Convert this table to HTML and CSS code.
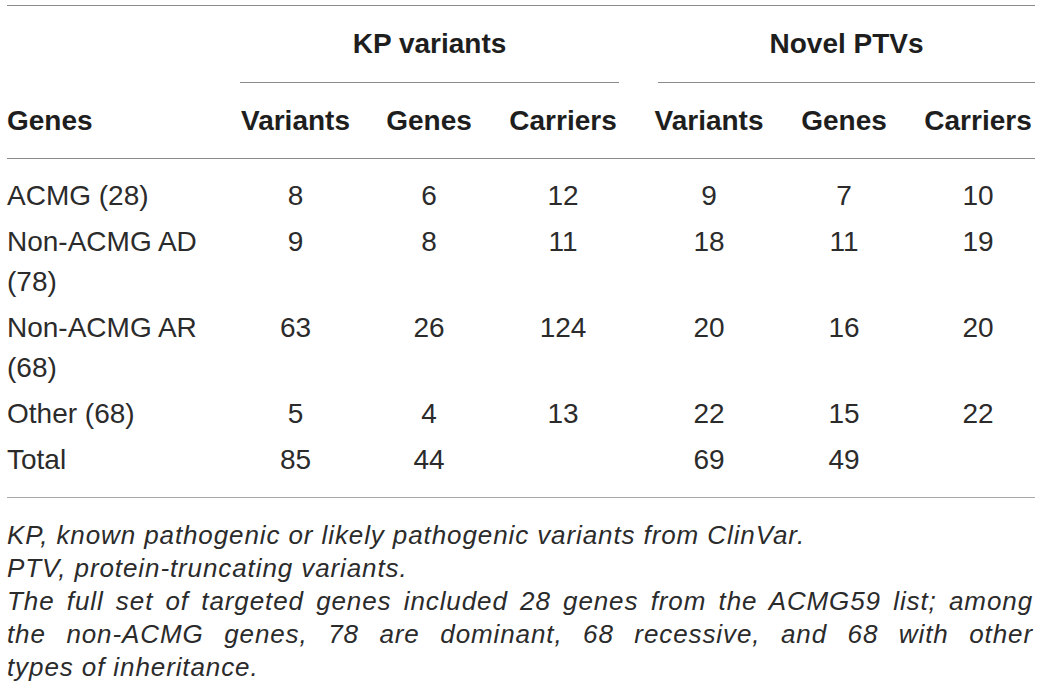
FILE: index.html
```html
<!DOCTYPE html>
<html>
<head>
<meta charset="UTF-8">
<title>KP variants and novel PTVs</title>
<link rel="stylesheet" href="styles.css">
</head>
<body>
	<div class="sheet">
		<table class="variants">
			<colgroup>
				<col class="c-genes">
				<col class="c-var">
				<col class="c-gen">
				<col class="c-car">
				<col class="c-var2">
				<col class="c-gen2">
				<col class="c-car2">
			</colgroup>
			<thead>
				<tr class="group-row">
					<th></th>
					<th colspan="3" class="group-kp"><div class="group-label">KP variants</div></th>
					<th colspan="3" class="group-novel"><div class="group-label">Novel PTVs</div></th>
				</tr>
				<tr class="head-row">
					<th class="name">Genes</th>
					<th>Variants</th>
					<th>Genes</th>
					<th>Carriers</th>
					<th>Variants</th>
					<th>Genes</th>
					<th class="last">Carriers</th>
				</tr>
			</thead>
			<tbody>
				<tr>
					<td class="name">ACMG (28)</td>
					<td>8</td><td>6</td><td>12</td>
					<td>9</td><td>7</td><td class="last">10</td>
				</tr>
				<tr>
					<td class="name">Non-ACMG AD (78)</td>
					<td>9</td><td>8</td><td>11</td>
					<td>18</td><td>11</td><td class="last">19</td>
				</tr>
				<tr>
					<td class="name">Non-ACMG AR (68)</td>
					<td>63</td><td>26</td><td>124</td>
					<td>20</td><td>16</td><td class="last">20</td>
				</tr>
				<tr>
					<td class="name">Other (68)</td>
					<td>5</td><td>4</td><td>13</td>
					<td>22</td><td>15</td><td class="last">22</td>
				</tr>
				<tr>
					<td class="name">Total</td>
					<td>85</td><td>44</td><td></td>
					<td>69</td><td>49</td><td class="last"></td>
				</tr>
			</tbody>
		</table>

		<div class="notes">
			<p>KP, known pathogenic or likely pathogenic variants from ClinVar.</p>
			<p>PTV, protein-truncating variants.</p>
			<p><span class="line">The full set of targeted genes included 28 genes from the ACMG59 list; among</span><span class="line">the non-ACMG genes, 78 are dominant, 68 recessive, and 68 with other</span>types of inheritance.</p>
		</div>
	</div>
</body>
</html>
```

FILE: styles.css
```css
* {
	padding: 0;
	margin: 0;
	box-sizing: border-box;
}

body {
	background-color: #fff;
	color: #2b2b2b;
	font-family: "Liberation Sans", Arial, sans-serif;
}

.sheet {
	width: 1028px;
	margin: 5px 0 0 7px;
}

.variants {
	width: 1028px;
	border-collapse: collapse;
	table-layout: fixed;
	font-size: 28px;
	line-height: 40px;
}

.c-genes { width: 216px; }
.c-var { width: 145px; }
.c-gen { width: 122px; }
.c-car { width: 146px; }
.c-var2 { width: 146px; }
.c-gen2 { width: 124px; }
.c-car2 { width: 129px; }

.variants th,
.variants td {
	padding: 3px 17px;
	text-align: center;
	vertical-align: top;
	white-space: nowrap;
}

.variants th {
	color: #1e1e1e;
	font-weight: bold;
}

.variants .name {
	padding-left: 0;
	text-align: left;
	white-space: normal;
}

.variants .last {
	padding-right: 2px;
}

/* header rules */
.group-row th {
	border-top: 1px solid #8c8c8c;
	padding-top: 18px;
	padding-bottom: 0;
}

.group-kp {
	padding-left: 20px;
	padding-right: 20px;
}

.variants .group-novel {
	padding-left: 22px;
	padding-right: 0;
}

.group-label {
	padding-bottom: 18px;
	border-bottom: 1px solid #8c8c8c;
}

.head-row th {
	padding-top: 18px;
	padding-bottom: 17px;
	border-bottom: 1px solid #8c8c8c;
}

tbody tr:first-child td {
	padding-top: 17px;
}

tbody tr:last-child td {
	padding-bottom: 17px;
	border-bottom: 1px solid #a8a8a8;
}

.notes {
	width: 1026px;
	padding-top: 21px;
	font-size: 26px;
	line-height: 33px;
	font-style: italic;
	letter-spacing: 0.9px;
	color: #2b2b2b;
}

/* justified lines break where the printed note breaks */
.notes .line {
	display: block;
	text-align: justify;
	text-align-last: justify;
}
```
